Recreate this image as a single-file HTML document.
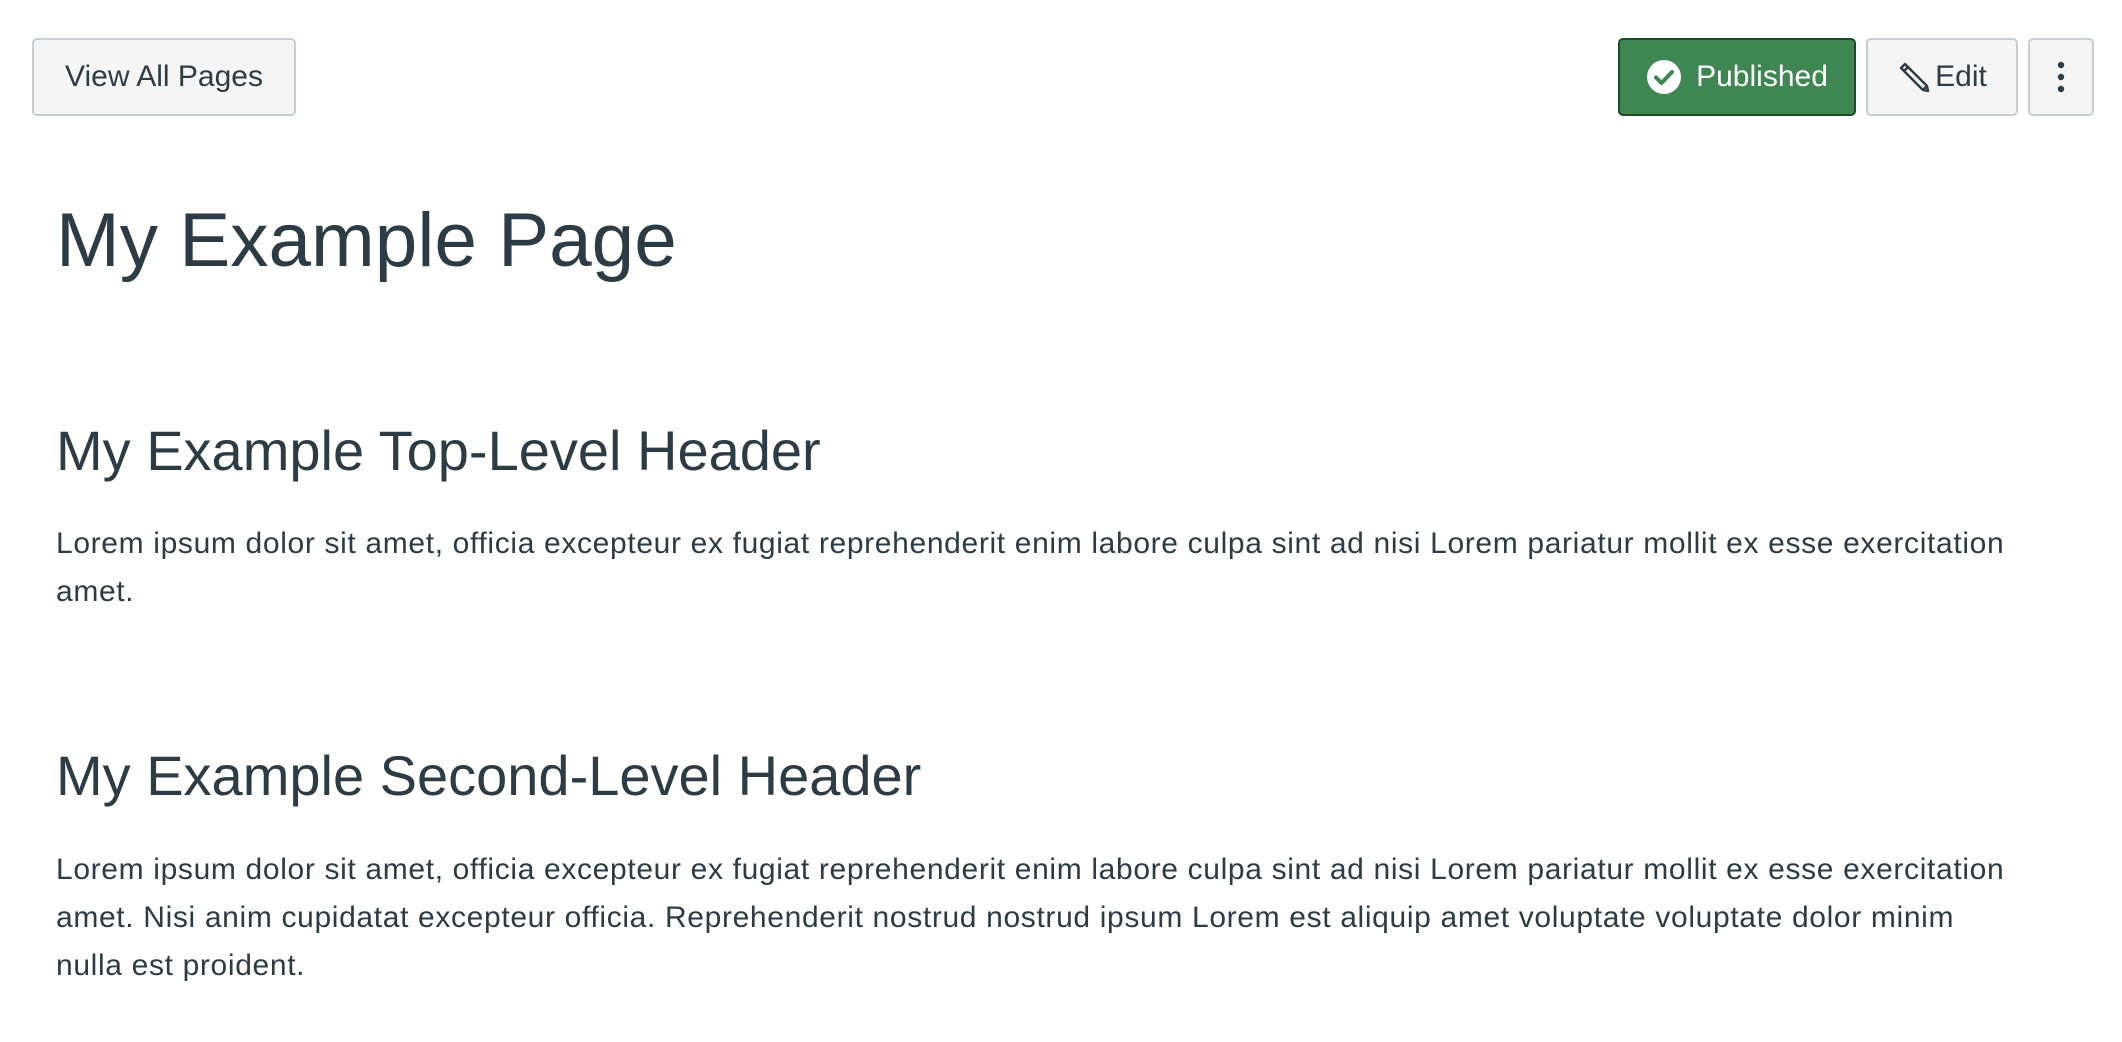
<!DOCTYPE html>
<html><head><meta charset="utf-8"><style>
*{margin:0;padding:0;box-sizing:border-box}
body{width:2122px;height:1042px;background:#fff;font-family:"Liberation Sans",sans-serif;color:#2D3B45;position:relative;overflow:hidden}
.btn{position:absolute;top:38px;height:78px;background:#F5F5F5;border:2px solid #C7CDD1;border-radius:5px;display:flex;align-items:center;justify-content:center;font-size:30px;color:#2D3B45}
.pub{background:#3E8752;border-color:#1E4A2A;color:#fff}
.t{position:absolute;left:56px;white-space:nowrap}
h1{font-weight:normal;font-size:76.5px}
h2{font-weight:normal;font-size:56px}
p{font-size:30px;line-height:48px;letter-spacing:0.65px}
</style></head><body>
<div class="btn" style="left:32px;width:264px">View All Pages</div>
<div class="btn pub" style="left:1618px;width:238px"><svg width="36" height="36" viewBox="0 0 36 36" style="margin-right:14px"><circle cx="18" cy="18" r="17" fill="#fff"/><path d="M10 18.5l5.5 5.5L26 13" stroke="#3E8752" stroke-width="4" fill="none" stroke-linecap="round" stroke-linejoin="round"/></svg>Published</div>
<div class="btn" style="left:1866px;width:152px"><svg width="34" height="34" viewBox="0 0 34 34" style="margin-right:4px"><path d="M4 8L8 4L30 26L31 31L26 30Z M7 11L11 7 M26 30L30 26" stroke="#2D3B45" stroke-width="2.4" fill="none" stroke-linejoin="round"/></svg>Edit</div>
<div class="btn" style="left:2028px;width:66px"><svg width="10" height="36" viewBox="0 0 10 36"><circle cx="5" cy="6" r="3.2" fill="#2D3B45"/><circle cx="5" cy="18" r="3.2" fill="#2D3B45"/><circle cx="5" cy="30" r="3.2" fill="#2D3B45"/></svg></div>
<h1 class="t" style="top:197px">My Example Page</h1>
<h2 class="t" style="top:418px">My Example Top-Level Header</h2>
<p class="t" style="top:520px">Lorem ipsum dolor sit amet, officia excepteur ex fugiat reprehenderit enim labore culpa sint ad nisi Lorem pariatur mollit ex esse exercitation<br>amet.</p>
<h2 class="t" style="top:743px">My Example Second-Level Header</h2>
<p class="t" style="top:846px">Lorem ipsum dolor sit amet, officia excepteur ex fugiat reprehenderit enim labore culpa sint ad nisi Lorem pariatur mollit ex esse exercitation<br>amet. Nisi anim cupidatat excepteur officia. Reprehenderit nostrud nostrud ipsum Lorem est aliquip amet voluptate voluptate dolor minim<br>nulla est proident.</p>
</body></html>
